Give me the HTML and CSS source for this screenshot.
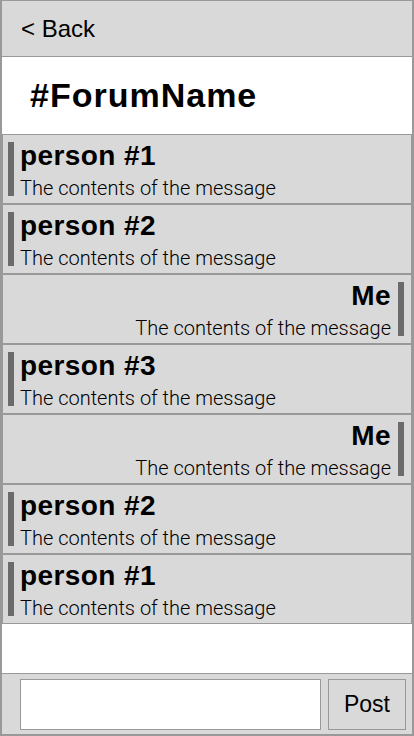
FILE: index.html
```html
<!DOCTYPE html>
<html>
<head>
<meta charset="utf-8">
<link rel="stylesheet" href="styles.css">
</head>
<body>
<div class="app">
  <header class="sec topbar"><span class="back">&lt; Back</span></header>
  <div class="sec titlebar"><h1 class="title">#ForumName</h1></div>
  <div class="sec list">
    <div class="msg"><div class="bar"></div><div class="body"><div class="name">person #1</div><div class="text">The contents of the message</div></div></div>
    <div class="msg"><div class="bar"></div><div class="body"><div class="name">person #2</div><div class="text">The contents of the message</div></div></div>
    <div class="msg me"><div class="bar"></div><div class="body"><div class="name">Me</div><div class="text">The contents of the message</div></div></div>
    <div class="msg"><div class="bar"></div><div class="body"><div class="name">person #3</div><div class="text">The contents of the message</div></div></div>
    <div class="msg me"><div class="bar"></div><div class="body"><div class="name">Me</div><div class="text">The contents of the message</div></div></div>
    <div class="msg"><div class="bar"></div><div class="body"><div class="name">person #2</div><div class="text">The contents of the message</div></div></div>
    <div class="msg"><div class="bar"></div><div class="body"><div class="name">person #1</div><div class="text">The contents of the message</div></div></div>
  </div>
  <div class="sec spacer"></div>
  <footer class="sec composer">
    <input class="field" type="text">
    <button class="post">Post</button>
  </footer>
</div>
</body>
</html>
```
FILE: styles.css
```css
* { box-sizing: border-box; }
html, body { margin: 0; padding: 0; background: #fff; }
body { font-family: "Liberation Sans", Arial, sans-serif; color: #000; }
.app {
  width: 414px;
  height: 736px;
  border: 1px solid #999;
  display: flex;
  flex-direction: column;
  overflow: hidden;
}
.sec {
  border-left: 1px solid #999;
  border-right: 1px solid #999;
}
.topbar {
  height: 56px;
  background: #d9d9d9;
  border-bottom: 1px solid #999;
  display: flex;
  align-items: center;
  padding-left: 19px;
  flex: none;
}
.back { font-size: 24px; line-height: 24px; padding-top: 1px; }
.titlebar {
  height: 77px;
  flex: none;
  padding-left: 28px;
  padding-top: 18px;
}
.title {
  margin: 0;
  font-size: 34px;
  line-height: 40px;
  font-weight: bold;
  letter-spacing: 1px;
}
.list { flex: none; display: flex; flex-direction: column; }
.msg {
  height: 70px;
  background: #d9d9d9;
  border: 1px solid #999;
  display: flex;
  align-items: flex-start;
}
.bar {
  width: 6px;
  height: 54px;
  margin-top: 7px;
  margin-left: 5px;
  margin-right: 6px;
  background: #6b6b6b;
  flex: none;
}
.body { display: flex; flex-direction: column; padding-top: 8px; }
.name {
  font-size: 28px;
  line-height: 26px;
  font-weight: bold;
  letter-spacing: 0.4px;
}
.text {
  font-family: Roboto, "Liberation Sans", sans-serif;
  font-weight: 300;
  font-size: 20px;
  line-height: 22px;
  margin-top: 8px;
}
.me { flex-direction: row-reverse; }
.me .bar { margin-left: 7px; margin-right: 7px; }
.me .body { align-items: flex-end; text-align: right; }
.spacer { flex: 1; }
.composer {
  flex: none;
  height: 62px;
  background: #d9d9d9;
  border-top: 1px solid #999;
  border-bottom: 1px solid #999;
  display: flex;
  align-items: flex-start;
  padding: 5px 6px 5px 18px;
  gap: 7px;
}
.field {
  width: 301px;
  height: 51px;
  border: 1px solid #999;
  background: #fff;
  margin: 0;
  padding: 0 6px;
  outline: none;
}
.post {
  width: 78px;
  height: 51px;
  border: 1px solid #999;
  background: #d9d9d9;
  margin: 0;
  padding: 0;
  font-family: "Liberation Sans", Arial, sans-serif;
  font-size: 23px;
  color: #000;
}
```
